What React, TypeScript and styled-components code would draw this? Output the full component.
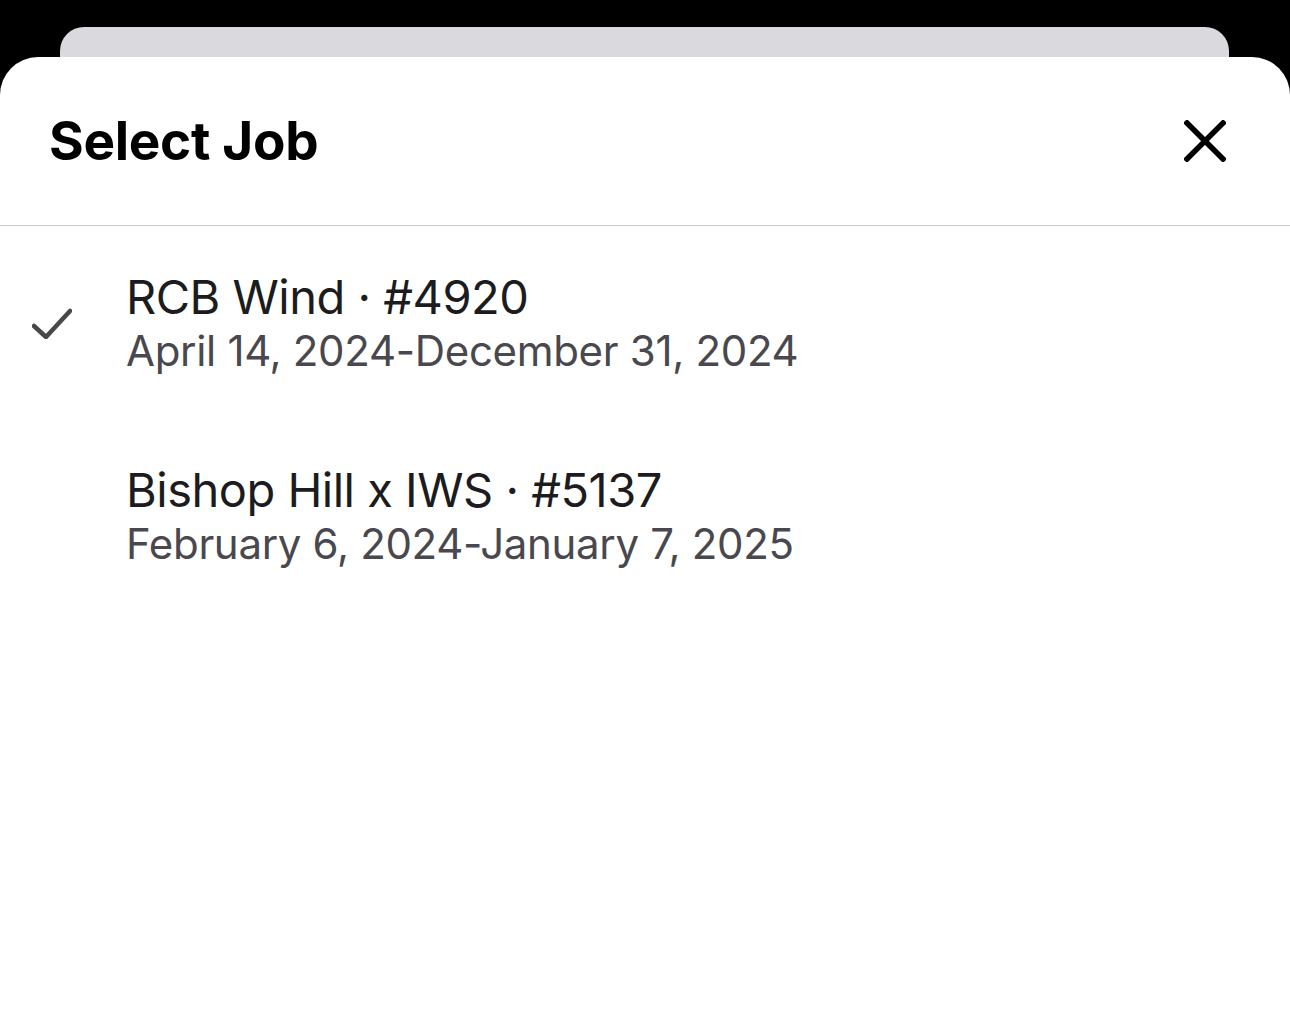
import React from 'react';
import styled, { createGlobalStyle } from 'styled-components';

const GlobalStyle = createGlobalStyle`
  html, body {
    margin: 0;
    padding: 0;
    background: #000;
  }
  body {
    font-family: Inter, "Noto Sans", "Liberation Sans", sans-serif;
    -webkit-font-smoothing: antialiased;
  }
`;

interface Job {
    id: number
    name: string
    range: string
    selected: boolean
}

const jobs: Job[] = [
    { id: 4920, name: 'RCB Wind', range: 'April 14, 2024-December 31, 2024', selected: true },
    { id: 5137, name: 'Bishop Hill x IWS', range: 'February 6, 2024-January 7, 2025', selected: false },
];

const Screen = styled.div`
  height: 1034px;
  overflow: hidden;
  display: flex;
  flex-direction: column;
  padding-top: 27px;
  box-sizing: border-box;
  background: #000;
`;

const BackCard = styled.div`
  height: 30px;
  margin: 0 61px 0 60px;
  background: #d9d9de;
  border-radius: 24px 24px 0 0;
  flex-shrink: 0;
`;

const Sheet = styled.div`
  flex: 1;
  background: #fff;
  border-radius: 38px 38px 0 0;
  display: flex;
  flex-direction: column;
`;

const Header = styled.div`
  height: 169px;
  box-sizing: border-box;
  padding: 0 64px 0 49px;
  display: flex;
  align-items: center;
  justify-content: space-between;
  border-bottom: 1px solid #c8c7cc;
`;

const Title = styled.h1`
  margin: 0;
  font-size: 53px;
  font-weight: 700;
  letter-spacing: -0.3px;
  color: #000;
`;

const CloseButton = styled.button`
  width: 42px;
  height: 42px;
  padding: 0;
  border: none;
  background: none;
  display: flex;
  align-items: center;
  justify-content: center;
`;

const List = styled.div`
  display: flex;
  flex-direction: column;
`;

const Row = styled.div`
  height: 193px;
  display: grid;
  grid-template-columns: 40px 1fr;
  column-gap: 54px;
  align-items: center;
  padding-left: 32px;
`;

const CheckSlot = styled.div`
  width: 40px;
  height: 32px;
  display: flex;
  align-items: center;
`;

const Texts = styled.div`
  display: flex;
  flex-direction: column;
`;

const JobName = styled.div`
  font-size: 47px;
  line-height: 56px;
  color: #1c1c1e;
  letter-spacing: -0.5px;
`;

const JobRange = styled.div`
  font-size: 42px;
  line-height: 52px;
  color: #48484e;
  letter-spacing: -0.32px;
`;

const CloseIcon = () => (
    <svg width="42" height="42" viewBox="0 0 42 42">
        <path d="M3 3 L39 39 M39 3 L3 39" stroke="#000" strokeWidth="5.5" strokeLinecap="square" fill="none" />
    </svg>
);

const CheckIcon = () => (
    <svg width="40" height="32" viewBox="0 0 40 32">
        <polyline points="2,19 14,30 38,4" stroke="#48484a" strokeWidth="4.5" fill="none" strokeLinecap="round" strokeLinejoin="round" />
    </svg>
);

const JobRow = ({ job }: { job: Job }) => (
    <Row>
        <CheckSlot>{job.selected && <CheckIcon />}</CheckSlot>
        <Texts>
            <JobName>{job.name} · #{job.id}</JobName>
            <JobRange>{job.range}</JobRange>
        </Texts>
    </Row>
);

export default function App() {
    return (
        <>
            <GlobalStyle />
            <Screen>
                <BackCard />
                <Sheet>
                    <Header>
                        <Title>Select Job</Title>
                        <CloseButton aria-label="Close">
                            <CloseIcon />
                        </CloseButton>
                    </Header>
                    <List>
                        {jobs.map((job) => <JobRow key={job.id} job={job} />)}
                    </List>
                </Sheet>
            </Screen>
        </>
    );
}
